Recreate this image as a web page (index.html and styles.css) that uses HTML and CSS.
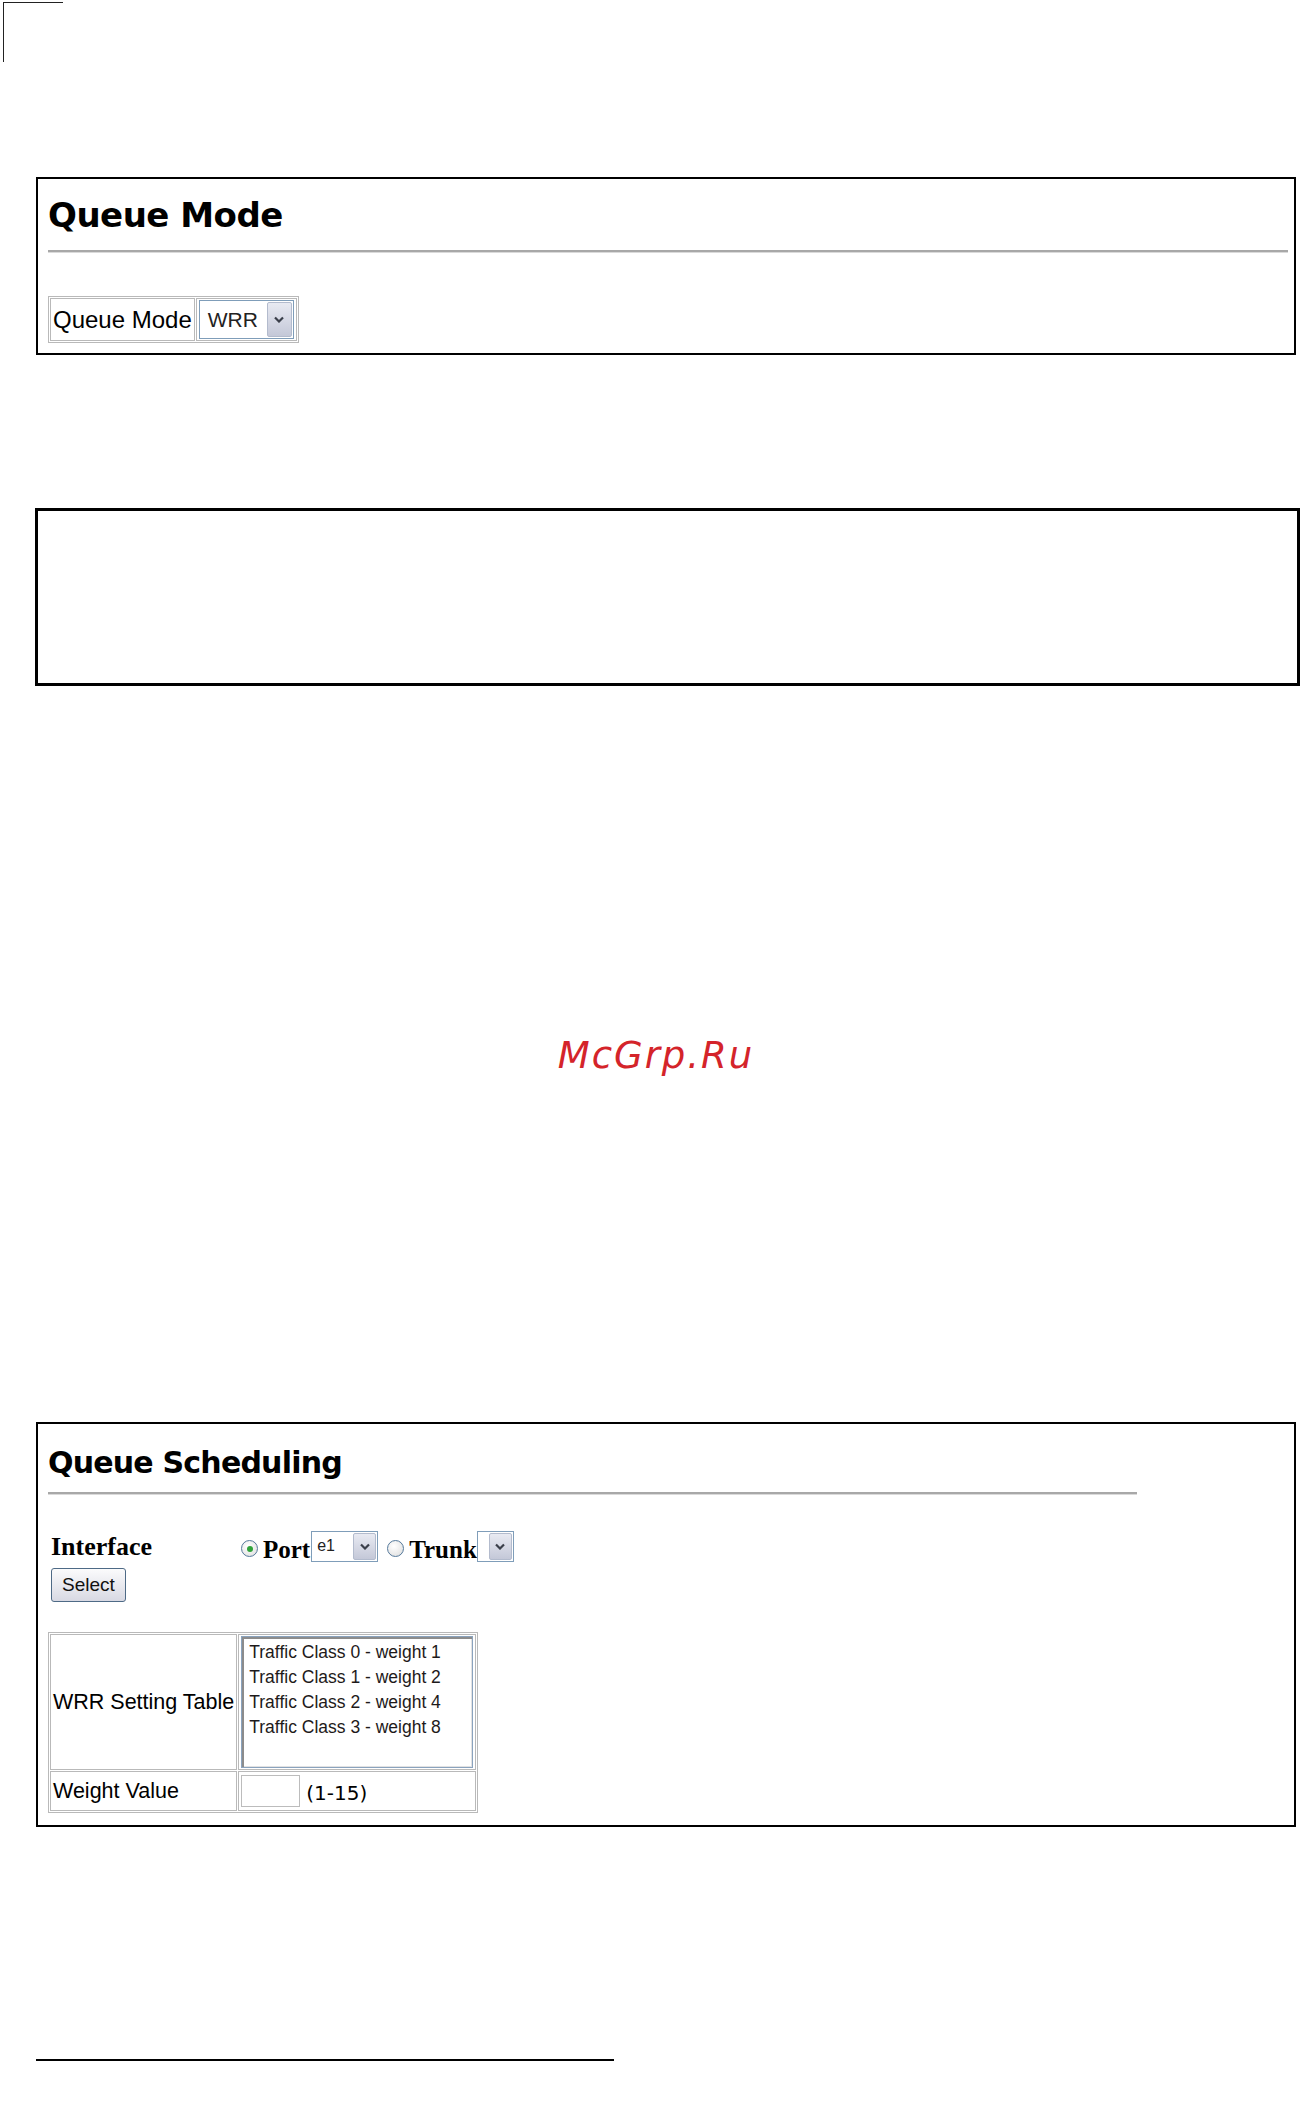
FILE: index.html
```html
<!DOCTYPE html>
<html lang="en">
<head>
    <meta charset="UTF-8">
    <meta name="viewport" content="width=device-width, initial-scale=1.0">
    <title>Queue Mode / Queue Scheduling</title>

    <link rel="stylesheet" href="styles.css">
</head>
<body>

    <div class="crop_mark"></div>

    <div class="panel" id="queue_mode">
        <h2>Queue Mode</h2>
        <div class="rule"></div>

        <table class="setting mode_table">
            <tr>
                <td class="name">Queue Mode</td>
                <td>
                    <div class="dropdown mode_select">
                        <span class="value">WRR</span>
                        <span class="arrow">
                            <svg width="10" height="7" viewBox="0 0 10 7"><path d="M1 1.5 L5 5.5 L9 1.5" fill="none" stroke="#3a3f4a" stroke-width="2.2"/></svg>
                        </span>
                    </div>
                </td>
            </tr>
        </table>
    </div>

    <div class="panel empty"></div>

    <div class="watermark">McGrp.Ru</div>

    <div class="panel" id="queue_scheduling">
        <h2 class="small">Queue Scheduling</h2>
        <div class="rule short"></div>

        <div class="iface_row">
            <div class="iface_label">Interface</div>
            <span class="radio checked"></span>
            <span class="opt">Port</span>
            <div class="dropdown port_select">
                <span class="value">e1</span>
                <span class="arrow">
                    <svg width="10" height="7" viewBox="0 0 10 7"><path d="M1 1.5 L5 5.5 L9 1.5" fill="none" stroke="#3a3f4a" stroke-width="2.2"/></svg>
                </span>
            </div>
            <span class="radio"></span>
            <span class="opt">Trunk</span>
            <div class="dropdown trunk_select">
                <span class="value"></span>
                <span class="arrow">
                    <svg width="10" height="7" viewBox="0 0 10 7"><path d="M1 1.5 L5 5.5 L9 1.5" fill="none" stroke="#3a3f4a" stroke-width="2.2"/></svg>
                </span>
            </div>
        </div>

        <div class="form_button">
            <button>Select</button>
        </div>

        <table class="setting wrr_table">
            <tr>
                <td class="name">WRR Setting Table</td>
                <td>
                    <div class="listbox">
                        <div class="item">Traffic Class 0 - weight 1</div>
                        <div class="item">Traffic Class 1 - weight 2</div>
                        <div class="item">Traffic Class 2 - weight 4</div>
                        <div class="item">Traffic Class 3 - weight 8</div>
                    </div>
                </td>
            </tr>
            <tr>
                <td class="name">Weight Value</td>
                <td>
                    <div class="weight_cell">
                        <span class="textbox"></span>
                        <span class="range">(1-15)</span>
                    </div>
                </td>
            </tr>
        </table>
    </div>

    <div class="foot_rule"></div>

</body>
</html>
```

FILE: styles.css
```css
body {
    margin: 0;
    font-family: "Liberation Sans", Arial, sans-serif;
    color: #000;
    background: #fff;
}

.crop_mark {
    width: 59px;
    height: 59px;
    margin: 2px 0 0 3px;
    border-top: 1px solid #222;
    border-left: 1px solid #222;
}

.panel {
    box-sizing: border-box;
    width: 1260px;
    height: 178px;
    margin: 115px 0 0 36px;
    padding: 0 6px 0 10px;
    border: 2px solid #000;
}

h2 {
    margin: 18px 0 0 0;
    font-family: "DejaVu Sans", Verdana, sans-serif;
    font-weight: bold;
    font-size: 34px;
    line-height: 37px;
    letter-spacing: -0.5px;
}

h2.small {
    margin-top: 20px;
    font-size: 30px;
    letter-spacing: -0.8px;
}

.rule {
    height: 0;
    margin-top: 16px;
    border-top: 2px solid #a8a8a8;
    border-bottom: 1px solid #dadada;
}

.rule.short {
    width: 1089px;
    margin-top: 11px;
}

/* bordered settings tables */
.setting {
    border: 1px solid #b9b9b9;
    border-spacing: 1px;
}

.setting td {
    border: 1px solid #b9b9b9;
    padding: 1px 2px;
    vertical-align: middle;
    white-space: nowrap;
}

.mode_table {
    margin-top: 43px;
}

.mode_table .name {
    font-size: 24px;
}

.dropdown {
    box-sizing: border-box;
    display: flex;
    align-items: center;
    border: 1px solid #7f9db9;
    background: #fff;
}

.dropdown .value {
    flex: 1;
    color: #222;
}

.dropdown .arrow {
    box-sizing: border-box;
    display: flex;
    align-items: center;
    justify-content: center;
    margin: 1px;
    align-self: stretch;
    border: 1px solid #b3bbcd;
    border-radius: 2px;
    background: linear-gradient(#e8eaf2, #c4c8d8);
}

.mode_select {
    width: 95px;
    height: 39px;
}

.mode_select .value {
    padding-left: 8px;
    font-size: 21px;
}

.mode_select .arrow {
    width: 25px;
}

.empty {
    width: 1265px;
    margin: 153px 0 0 35px;
    border-width: 3px;
}

.watermark {
    height: 40px;
    margin: 350px 0 0 12px;
    text-align: center;
    font-family: "DejaVu Sans", sans-serif;
    font-style: italic;
    font-size: 37px;
    line-height: 40px;
    letter-spacing: 2px;
    color: #d4242a;
}

#queue_scheduling {
    height: 405px;
    margin-top: 346px;
}

.iface_row {
    display: flex;
    align-items: center;
    height: 31px;
    margin-top: 36px;
    padding-left: 3px;
    font-family: "Liberation Serif", "Times New Roman", serif;
    font-weight: bold;
    font-size: 26px;
}

.iface_label {
    width: 190px;
}

.radio {
    box-sizing: border-box;
    width: 17px;
    height: 17px;
    margin: 4px 5px 0 0;
    border: 1px solid #55799b;
    border-radius: 50%;
    background: radial-gradient(circle at 40% 35%, #fff, #dcdcdc);
    display: flex;
    align-items: center;
    justify-content: center;
}

.radio.checked::after {
    content: "";
    width: 6px;
    height: 6px;
    border-radius: 50%;
    background: #2fa33a;
}

.opt {
    margin-top: 6px;
    font-size: 25px;
}

.port_select {
    width: 67px;
    height: 31px;
    margin: 0 9px 0 1px;
}

.port_select .value {
    padding: 6px 0 0 5px;
    font-family: "Liberation Sans", Arial, sans-serif;
    font-weight: normal;
    font-size: 16px;
    line-height: 16px;
    align-self: flex-start;
}

.port_select .arrow,
.trunk_select .arrow {
    width: 23px;
}

.trunk_select {
    width: 37px;
    height: 31px;
}

.form_button {
    margin-top: 6px;
    padding-left: 3px;
}

.form_button button {
    width: 75px;
    height: 34px;
    padding: 0;
    border: 1px solid #4e6a86;
    border-radius: 3px;
    background: linear-gradient(#fbfbfc, #d8d9e3);
    font-family: "Liberation Sans", Arial, sans-serif;
    font-size: 19px;
    color: #111;
}

.wrr_table {
    margin-top: 30px;
}

.wrr_table .name {
    font-size: 21.5px;
}

.listbox {
    box-sizing: border-box;
    width: 232px;
    height: 132px;
    padding: 3px 0 0 7px;
    border: 1px solid #8aa3be;
    box-shadow: inset 2px 2px 0 #8c8c8c, inset -1px -1px 0 #e2e2e2;
    font-size: 17.5px;
    line-height: 25px;
    color: #1e1a1a;
}

.weight_cell {
    display: flex;
    align-items: center;
    height: 36px;
}

.textbox {
    box-sizing: border-box;
    width: 59px;
    height: 32px;
    border: 1px solid #bcbcbc;
}

.range {
    margin: 4px 0 0 6px;
    font-family: "DejaVu Sans", sans-serif;
    font-size: 20px;
}

.foot_rule {
    width: 578px;
    height: 2px;
    margin: 232px 0 0 36px;
    background: #000;
}
```
